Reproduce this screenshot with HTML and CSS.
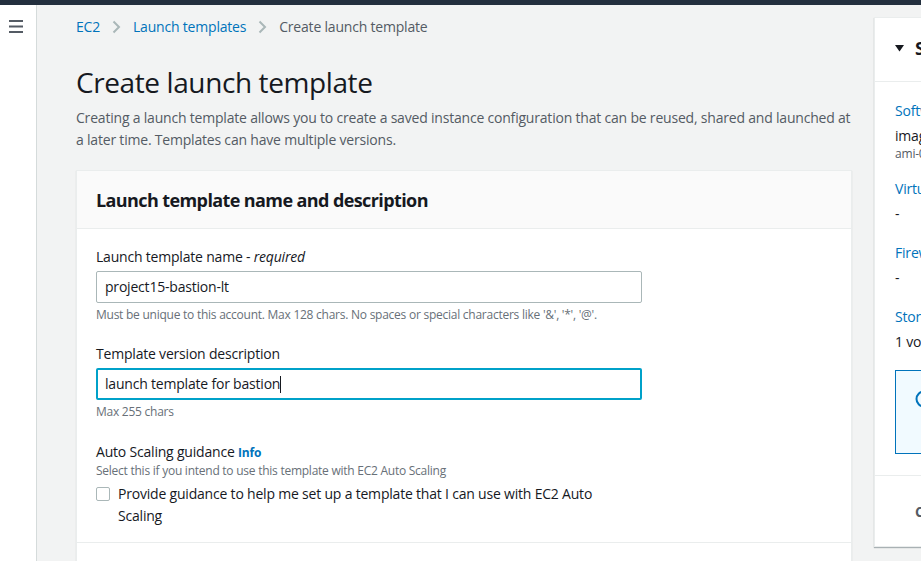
FILE: index.html
```html
<!DOCTYPE html>
<html lang="en">
<head>
<meta charset="utf-8">
<title>Create launch template</title>
<link rel="stylesheet" href="styles.css">
</head>
<body>
<div class="topbar"></div>
<div class="layout">
  <aside class="sidebar">
    <svg class="hamburger" width="14" height="13" viewBox="0 0 14 13"><rect x="0" y="0" width="14" height="2" fill="#545b64"/><rect x="0" y="5.5" width="14" height="2" fill="#545b64"/><rect x="0" y="11" width="14" height="2" fill="#545b64"/></svg>
  </aside>
  <div class="content">
    <main class="main-col">
      <nav class="breadcrumb">
        <a class="crumb-link">EC2</a>
        <svg class="chev" width="9" height="14" viewBox="0 0 9 14"><path d="M1.5 1.5 L7 7 L1.5 12.5" fill="none" stroke="#aab7b8" stroke-width="2"/></svg>
        <a class="crumb-link">Launch templates</a>
        <svg class="chev" width="9" height="14" viewBox="0 0 9 14"><path d="M1.5 1.5 L7 7 L1.5 12.5" fill="none" stroke="#aab7b8" stroke-width="2"/></svg>
        <span class="crumb-current">Create launch template</span>
      </nav>
      <h1 class="page-title">Create launch template</h1>
      <p class="page-desc">Creating a launch template allows you to create a saved instance configuration that can be reused, shared and launched at a later time. Templates can have multiple versions.</p>

      <section class="card">
        <header class="card-header"><h2>Launch template name and description</h2></header>
        <div class="card-body">
          <div class="field">
            <label class="field-label">Launch template name - <i>required</i></label>
            <div class="input">project15-bastion-lt</div>
            <div class="hint">Must be unique to this account. Max 128 chars. No spaces or special characters like '&amp;', '*', '@'.</div>
          </div>
          <div class="field">
            <label class="field-label">Template version description</label>
            <div class="input focused">launch template for bastion<span class="caret"></span></div>
            <div class="hint">Max 255 chars</div>
          </div>
          <div class="field">
            <label class="field-label tight">Auto Scaling guidance <a class="info">Info</a></label>
            <div class="hint">Select this if you intend to use this template with EC2 Auto Scaling</div>
            <div class="checkbox-row">
              <span class="checkbox"></span>
              <span class="checkbox-text">Provide guidance to help me set up a template that I can use with EC2 Auto Scaling</span>
            </div>
          </div>
        </div>
        <div class="card-next"></div>
      </section>
    </main>

    <aside class="side-panel">
      <header class="panel-header">
        <svg class="caret-down" width="9" height="7" viewBox="0 0 9 7"><path d="M0 0 H9 L4.5 6.5 Z" fill="#16191f"/></svg>
        <h2>Summary</h2>
      </header>
      <div class="panel-body">
        <div class="sum-item">
          <a class="sum-link">Software Image (AMI)</a>
          <div class="sum-value">image not specified</div>
          <div class="sum-sub">ami-0c55b159cbfafe1f0</div>
        </div>
        <div class="sum-item">
          <a class="sum-link">Virtual server type (instance type)</a>
          <div class="sum-value">-</div>
        </div>
        <div class="sum-item">
          <a class="sum-link">Firewall (security group)</a>
          <div class="sum-value">-</div>
        </div>
        <div class="sum-item">
          <a class="sum-link">Storage (volumes)</a>
          <div class="sum-value">1 volume(s) - 8 GiB</div>
        </div>
        <div class="info-box">
          <svg class="info-icon" width="18" height="18" viewBox="0 0 18 18"><circle cx="9" cy="9" r="7.5" fill="none" stroke="#0073bb" stroke-width="2"/><rect x="8" y="8" width="2" height="5" fill="#0073bb"/><rect x="8" y="4.5" width="2" height="2" fill="#0073bb"/></svg>
          <span>Free tier: In your first year includes 750 hours of t2.micro</span>
        </div>
      </div>
      <footer class="panel-footer">
        <span class="cancel">Cancel</span>
      </footer>
    </aside>
  </div>
</div>
</body>
</html>
```

FILE: styles.css
```css
* { box-sizing: border-box; }
html, body { margin: 0; padding: 0; }
body {
  background: #f2f3f3;
  font-family: "Open Sans", "Liberation Sans", sans-serif;
  font-size: 14px;
  letter-spacing: -0.2px;
  color: #16191f;
  width: 921px;
  height: 561px;
  overflow: hidden;
}
.topbar { height: 5px; background: #232f3e; }
.layout { display: flex; height: 556px; }
.sidebar {
  width: 37px;
  flex: none;
  background: #fff;
  border-right: 1px solid #d5dbdb;
  padding: 15px 0 0 9px;
}
.hamburger { display: block; }
.content { display: flex; align-items: flex-start; padding-left: 39px; }
.main-col { width: 776px; flex: none; }
.breadcrumb {
  display: flex;
  align-items: center;
  height: 22px;
  margin-top: 11px;
  line-height: 22px;
}
.crumb-link { color: #0073bb; }
.crumb-current { color: #545b64; }
.chev { margin: 0 12px; }
.page-title {
  margin: 26px 0 0;
  font-size: 28px;
  font-weight: 400;
  letter-spacing: -0.4px;
  line-height: 36px;
}
.page-desc {
  margin: 7px 0 0;
  color: #545b64;
  line-height: 22px;
}
.card {
  margin-top: 19px;
  background: #fff;
  border: 1px solid #eaeded;
  border-bottom: none;
  box-shadow: 0 1px 1px rgba(0,28,36,0.15);
}
.card-header {
  background: #fafafa;
  border-bottom: 1px solid #eaeded;
  padding: 17px 19px 16px;
}
.card-header h2 { margin: 0; font-size: 18px; font-weight: 700; letter-spacing: -0.6px; line-height: 24px; }
.card-body { padding: 17px 19px 15px; border-bottom: 1px solid #eaeded; }
.field + .field { margin-top: 20px; }
.field-label { display: block; line-height: 22px; }
.field-label.tight { line-height: 20px; padding-top: 2px; }
.field-label i { font-style: italic; }
.info { color: #0073bb; font-weight: 700; font-size: 12px; }
.input {
  margin-top: 3px;
  width: 546px;
  height: 32px;
  border: 1px solid #aab7b8;
  border-radius: 2px;
  padding: 0 8px;
  line-height: 30px;
  display: flex;
  align-items: center;
}
.input.focused { border: 2px solid #00a1c9; padding: 0 7px; }
.caret { display: inline-block; width: 1px; height: 17px; background: #16191f; }
.hint { font-size: 12px; color: #687078; line-height: 16px; margin-top: 4px; letter-spacing: -0.25px; }
.field-label.tight + .hint { margin-top: 0; }
.checkbox-row { display: flex; align-items: flex-start; margin-top: 4px; }
.checkbox {
  flex: none;
  width: 14px; height: 14px;
  border: 1px solid #aab7b8;
  border-radius: 2px;
  margin-top: 4px;
  background: #fff;
}
.checkbox-text { margin-left: 8px; line-height: 22px; width: 500px; }
.card-next { height: 20px; background: #fff; }
.side-panel {
  margin-left: 22px;
  margin-top: 12px;
  width: 280px;
  flex: none;
  background: #fff;
  border: 1px solid #eaeded;
  box-shadow: 0 1px 1px rgba(0,28,36,0.3);
}
.panel-header {
  display: flex;
  align-items: center;
  height: 64px;
  padding: 0 0 3px 20px;
  border-bottom: 1px solid #eaeded;
}
.caret-down { margin-right: 11px; }
.panel-header h2 { margin: 0; font-size: 18px; font-weight: 700; }
.panel-body { padding: 18px 20px 21px; }
.sum-link { display: block; color: #0073bb; line-height: 22px; }
.sum-value { margin-top: 3px; line-height: 22px; }
.sum-sub { font-size: 12px; color: #545b64; line-height: 14px; }
.sum-item + .sum-item { margin-top: 17px; }
.info-box {
  margin-top: 17px;
  height: 84px;
  border: 1px solid #0073bb;
  background: #f1faff;
  padding: 19px 14px 0 19px;
  display: flex;
  gap: 10px;
}
.info-icon { flex: none; }
.panel-footer { border-top: 1px solid #eaeded; height: 71px; padding: 26px 0 0 40px; }
.cancel { font-weight: 700; color: #545b64; }
```
